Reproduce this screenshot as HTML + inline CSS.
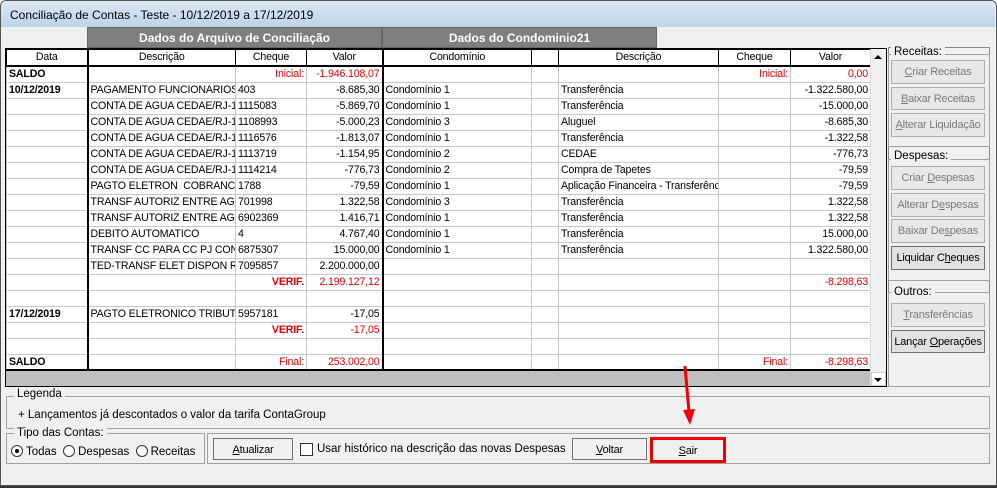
<!DOCTYPE html>
<html><head><meta charset="utf-8"><style>
*{box-sizing:border-box;margin:0;padding:0}
body{width:997px;height:488px;overflow:hidden;background:#fff;font-family:"Liberation Sans","DejaVu Sans",sans-serif;font-size:11px;color:#000;position:relative}
.a{position:absolute}
#win{left:0;top:0;width:997px;height:486px;background:#f0f0f0;border:1px solid #555;border-radius:6px 6px 0 0}
#title{left:1px;top:1px;width:994px;height:26px;background:linear-gradient(#dce8f4,#bcd3ea);border-radius:5px 5px 0 0;font-size:12px;padding:7px 0 0 9px}
.band{background:#7f7f7f;color:#fff;font-weight:bold;text-align:center;font-size:12px;line-height:20px;border:1px solid #666}
table{border-collapse:collapse;table-layout:fixed;position:absolute;left:6px;top:49px;width:864px;background:#fff;font-size:10.6px;letter-spacing:-0.15px}
td{height:16px;border:1px solid #c8c8c8;padding:0 2px;white-space:nowrap;overflow:hidden;line-height:15px}
tr.h td{height:16px;text-align:center;border-bottom:2px solid #000;border-top:1px solid #000;border-color:#000 #000 #000 #000;background:#fff}
td.b{border-left:2px solid #000}
.r{text-align:right}.red{color:#e00000}.bd{font-weight:bold}
.btn{position:absolute;border:1px solid #adadad;background:#e8e8e8;text-align:center;line-height:22px;color:#7a7a7a;font-size:11px;white-space:nowrap;overflow:hidden;letter-spacing:-0.2px}
.btn.on{color:#000;border-color:#707070;background:#e1e1e1}
.grp{position:absolute;border:1px solid #a0a0a0}
.gl{position:absolute;background:#f0f0f0;padding:0 3px;font-size:11.5px}
.rad{display:inline-block;width:12px;height:12px;border:1px solid #333;border-radius:50%;vertical-align:-2px;margin-right:3px;background:#fff;position:relative}
</style></head><body>
<div id="win" class="a"></div>
<div id="title" class="a">Conciliação de Contas - Teste - 10/12/2019 a 17/12/2019</div>
<div class="a band" style="left:87px;top:27px;width:295px;height:21px">Dados do Arquivo de Conciliação</div>
<div class="a band" style="left:382px;top:27px;width:275px;height:21px">Dados do Condominio21</div>
<div class="a" style="left:5px;top:48px;width:882px;height:339px;border:1px solid #000;background:#bfbfbf"></div>
<table>
<colgroup><col style="width:81px"><col style="width:148px"><col style="width:71px"><col style="width:76px"><col style="width:149px"><col style="width:27px"><col style="width:160px"><col style="width:72px"><col style="width:80px"></colgroup>
<tr class="h"><td>Data</td><td class="b">Descrição</td><td>Cheque</td><td>Valor</td><td class="b">Condomínio</td><td></td><td>Descrição</td><td>Cheque</td><td>Valor</td></tr>
<tr><td class="bd">SALDO</td><td class="b"></td><td class="r red">Inicial:</td><td class="r red">-1.946.108,07</td><td class="b"></td><td></td><td></td><td class="r red">Inicial:</td><td class="r red">0,00</td></tr>
<tr><td class="bd">10/12/2019</td><td class="b">PAGAMENTO FUNCIONARIOS</td><td>403</td><td class="r">-8.685,30</td><td class="b">Condomínio 1</td><td></td><td>Transferência</td><td></td><td class="r">-1.322.580,00</td></tr>
<tr><td></td><td class="b">CONTA DE AGUA CEDAE/RJ-1</td><td>1115083</td><td class="r">-5.869,70</td><td class="b">Condomínio 1</td><td></td><td>Transferência</td><td></td><td class="r">-15.000,00</td></tr>
<tr><td></td><td class="b">CONTA DE AGUA CEDAE/RJ-1</td><td>1108993</td><td class="r">-5.000,23</td><td class="b">Condomínio 3</td><td></td><td>Aluguel</td><td></td><td class="r">-8.685,30</td></tr>
<tr><td></td><td class="b">CONTA DE AGUA CEDAE/RJ-1</td><td>1116576</td><td class="r">-1.813,07</td><td class="b">Condomínio 1</td><td></td><td>Transferência</td><td></td><td class="r">-1.322,58</td></tr>
<tr><td></td><td class="b">CONTA DE AGUA CEDAE/RJ-1</td><td>1113719</td><td class="r">-1.154,95</td><td class="b">Condomínio 2</td><td></td><td>CEDAE</td><td></td><td class="r">-776,73</td></tr>
<tr><td></td><td class="b">CONTA DE AGUA CEDAE/RJ-1</td><td>1114214</td><td class="r">-776,73</td><td class="b">Condomínio 2</td><td></td><td>Compra de Tapetes</td><td></td><td class="r">-79,59</td></tr>
<tr><td></td><td class="b">PAGTO ELETRON&nbsp; COBRANCA</td><td>1788</td><td class="r">-79,59</td><td class="b">Condomínio 1</td><td></td><td>Aplicação Financeira - Transferência</td><td></td><td class="r">-79,59</td></tr>
<tr><td></td><td class="b">TRANSF AUTORIZ ENTRE AGS</td><td>701998</td><td class="r">1.322,58</td><td class="b">Condomínio 3</td><td></td><td>Transferência</td><td></td><td class="r">1.322,58</td></tr>
<tr><td></td><td class="b">TRANSF AUTORIZ ENTRE AGS</td><td>6902369</td><td class="r">1.416,71</td><td class="b">Condomínio 1</td><td></td><td>Transferência</td><td></td><td class="r">1.322,58</td></tr>
<tr><td></td><td class="b">DEBITO AUTOMATICO</td><td>4</td><td class="r">4.767,40</td><td class="b">Condomínio 1</td><td></td><td>Transferência</td><td></td><td class="r">15.000,00</td></tr>
<tr><td></td><td class="b">TRANSF CC PARA CC PJ CON</td><td>6875307</td><td class="r">15.000,00</td><td class="b">Condomínio 1</td><td></td><td>Transferência</td><td></td><td class="r">1.322.580,00</td></tr>
<tr><td></td><td class="b">TED-TRANSF ELET DISPON RE</td><td>7095857</td><td class="r">2.200.000,00</td><td class="b"></td><td></td><td></td><td></td><td></td></tr>
<tr><td></td><td class="b"></td><td class="r red bd">VERIF.</td><td class="r red">2.199.127,12</td><td class="b"></td><td></td><td></td><td></td><td class="r red">-8.298,63</td></tr>
<tr><td></td><td class="b"></td><td></td><td></td><td class="b"></td><td></td><td></td><td></td><td></td></tr>
<tr><td class="bd">17/12/2019</td><td class="b">PAGTO ELETRONICO TRIBUTO</td><td>5957181</td><td class="r">-17,05</td><td class="b"></td><td></td><td></td><td></td><td></td></tr>
<tr><td></td><td class="b"></td><td class="r red bd">VERIF.</td><td class="r red">-17,05</td><td class="b"></td><td></td><td></td><td></td><td></td></tr>
<tr><td></td><td class="b"></td><td></td><td></td><td class="b"></td><td></td><td></td><td></td><td></td></tr>
<tr><td class="bd">SALDO</td><td class="b"></td><td class="r red">Final:</td><td class="r red">253.002,00</td><td class="b"></td><td></td><td></td><td class="r red">Final:</td><td class="r red">-8.298,63</td></tr>
</table>
<div class="a" style="left:6px;top:369px;width:864px;height:2px;background:#000"></div>
<div class="a" style="left:870px;top:49px;width:16px;height:337px;background:#f0f0f0;border-left:1px solid #ddd"></div>
<div class="a" style="left:874px;top:55px;width:0;height:0;border-left:4px solid transparent;border-right:4px solid transparent;border-bottom:4px solid #000"></div>
<div class="a" style="left:871px;top:372px;width:15px;height:14px;background:#fff;border:1px solid #ccc"></div>
<div class="a" style="left:874px;top:378px;width:0;height:0;border-left:4px solid transparent;border-right:4px solid transparent;border-top:4px solid #000"></div>
<div class="grp" style="left:888px;top:47px;width:102px;height:340px;border-color:#888"></div>
<div class="grp" style="left:888px;top:54px;width:102px;height:93px"></div><div class="gl" style="left:891px;top:46px;">Receitas:</div>
<div class="btn" style="left:891px;top:60px;width:94px;height:24px"><u>C</u>riar Receitas</div>
<div class="btn" style="left:891px;top:87px;width:94px;height:23px"><u>B</u>aixar Receitas</div>
<div class="btn" style="left:891px;top:113px;width:94px;height:24px"><u>A</u>lterar Liquidação</div>
<div class="grp" style="left:888px;top:159px;width:102px;height:122px"></div><div class="gl" style="left:891px;top:150px;">Despesas:</div>
<div class="btn" style="left:891px;top:166px;width:94px;height:24px">Criar <u>D</u>espesas</div>
<div class="btn" style="left:891px;top:193px;width:94px;height:24px">Alterar D<u>e</u>spesas</div>
<div class="btn" style="left:891px;top:219px;width:94px;height:24px">Baixar De<u>s</u>pesas</div>
<div class="btn on" style="left:891px;top:246px;width:94px;height:24px">Liquidar C<u>h</u>eques</div>
<div class="grp" style="left:888px;top:292px;width:102px;height:95px"></div><div class="gl" style="left:891px;top:286px;">Outros:</div>
<div class="btn" style="left:891px;top:303px;width:94px;height:24px"><u>T</u>ransferências</div>
<div class="btn on" style="left:891px;top:330px;width:94px;height:23px">Lançar <u>O</u>perações</div>
<div class="grp" style="left:6px;top:396px;width:984px;height:33px"></div>
<div class="gl" style="left:14px;top:388px;">Legenda</div>
<div class="a" style="left:18px;top:409px;font-size:11.5px">+ Lançamentos já descontados o valor da tarifa ContaGroup</div>
<div class="grp" style="left:6px;top:433px;width:199px;height:31px"></div>
<div class="gl" style="left:14px;top:427px;">Tipo das Contas:</div>
<div class="a" style="left:11px;top:445px;font-size:11.5px;white-space:nowrap"><span class="rad"><span class="a" style="left:3px;top:3px;width:4px;height:4px;background:#000;border-radius:50%"></span></span>Todas &nbsp;<span class="rad"></span>Despesas &nbsp;<span class="rad"></span>Receitas</div>
<div class="grp" style="left:207px;top:433px;width:783px;height:31px"></div>
<div class="btn on" style="left:213px;top:438px;width:80px;height:22px;background:#f0f0f0"><u>A</u>tualizar</div>
<div class="a" style="left:300px;top:443px;width:13px;height:13px;border:1px solid #333;background:#fff"></div>
<div class="a" style="left:317px;top:443px;font-size:11.5px">Usar histórico na descrição das novas Despesas</div>
<div class="btn on" style="left:572px;top:438px;width:75px;height:22px;background:#f0f0f0"><u>V</u>oltar</div>
<div class="btn on" style="left:652px;top:439px;width:72px;height:22px;background:#f0f0f0"><u>S</u>air</div>
<div class="a" style="left:650px;top:437px;width:76px;height:26px;border:3px solid #e00"></div>
<svg class="a" style="left:670px;top:360px" width="40" height="70"><line x1="15" y1="6" x2="19" y2="52" stroke="#e00" stroke-width="3"/><polygon points="13,50 25,49 20,65" fill="#e00"/></svg>
<div class="a" style="left:0;top:486px;width:997px;height:2px;background:#333"></div>
</body></html>
